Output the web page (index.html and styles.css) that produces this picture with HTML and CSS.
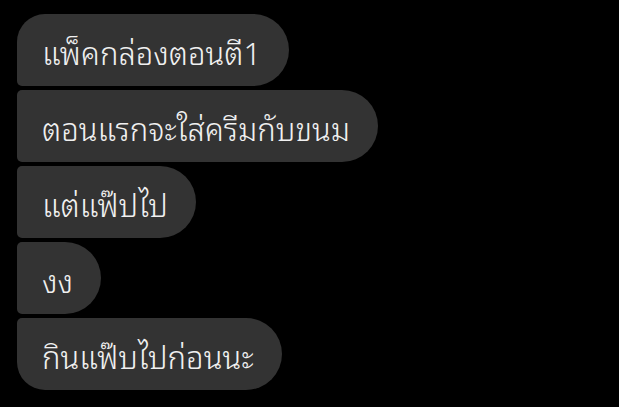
FILE: index.html
```html
<!DOCTYPE html>
<html lang="th">
<head>
<meta charset="utf-8">
<link rel="stylesheet" href="styles.css">
</head>
<body>
<div class="thread">
  <div class="bubble first">แพ็คกล่องตอนตี1</div>
  <div class="bubble">ตอนแรกจะใส่ครีมกับขนม</div>
  <div class="bubble">แต่แฟ๊ปไป</div>
  <div class="bubble">งง</div>
  <div class="bubble last">กินแฟ๊บไปก่อนนะ</div>
</div>
</body>
</html>
```
FILE: styles.css
```css
html, body {
  margin: 0;
  padding: 0;
  background: #000;
  width: 619px;
  height: 407px;
  overflow: hidden;
}
.thread {
  display: flex;
  flex-direction: column;
  align-items: flex-start;
  gap: 4px;
  padding: 14px 0 0 17px;
}
.bubble {
  box-sizing: border-box;
  height: 72px;
  display: flex;
  align-items: center;
  padding: 2px 28px 0 25px;
  background: #333333;
  color: #f0f0f0;
  font-family: "Noto Sans Thai Looped", "Noto Sans", sans-serif;
  font-size: 31px;
  font-weight: 300;
  border-radius: 5px 36px 36px 5px;
  white-space: nowrap;
}
.bubble.first {
  border-top-left-radius: 28px;
}
.bubble.last {
  border-bottom-left-radius: 28px;
}
```
